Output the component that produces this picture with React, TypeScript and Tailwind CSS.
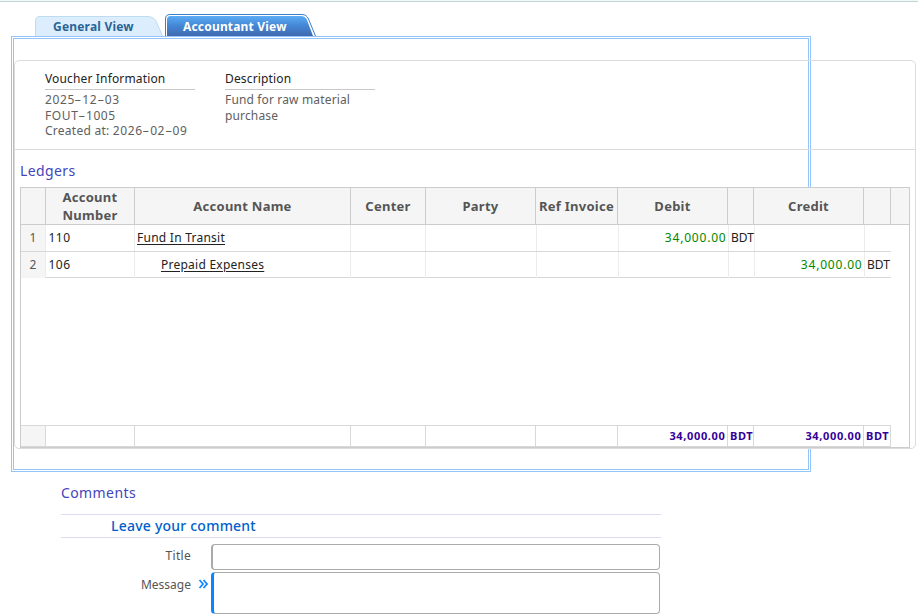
import React, { useState } from 'react';
import clsx from 'clsx';

const headCols = 'grid grid-cols-[25px_89px_216px_75px_110px_82px_110px_26px_110px_27px]';
const bodyCols = 'grid grid-cols-[25px_89px_216px_75px_111px_82px_110px_26px_110px_26px]';

const columns = [
  { id: 'no', label: '' },
  { id: 'number', label: 'Account Number' },
  { id: 'name', label: 'Account Name' },
  { id: 'center', label: 'Center' },
  { id: 'party', label: 'Party' },
  { id: 'ref', label: 'Ref Invoice' },
  { id: 'debit', label: 'Debit' },
  { id: 'debitCur', label: '' },
  { id: 'credit', label: 'Credit' },
  { id: 'creditCur', label: '' },
];

const rows = [
  { no: 1, number: '110', name: 'Fund In Transit', debit: '34,000.00', credit: '', indent: false },
  { no: 2, number: '106', name: 'Prepaid Expenses', debit: '', credit: '34,000.00', indent: true },
];

function Tabs() {
  return (
    <div className="flex h-[22px] items-end pl-[35px] text-[12px] font-bold">
      <div className="relative h-5 w-[128px]">
        <svg className="absolute inset-0" width="128" height="20" viewBox="0 0 128 20">
          <path d="M0.5 20V5Q0.5 0.5 5 0.5H112Q118.500 0.500 121 5L127.500 20Z" fill="#dceefd" />
          <path d="M0.5 20V5Q0.5 0.5 5 0.5H112Q118.500 0.500 121 5L127.500 20" fill="none" stroke="#bddcf0" />
        </svg>
        <span className="relative block pl-[18px] leading-[21px] tracking-[0.2px] text-[#2a6496]">General View</span>
      </div>
      <div className="relative ml-0.5 h-[22px] w-[151px]">
        <svg className="absolute inset-0" width="151" height="22" viewBox="0 0 151 22">
          <defs>
            <linearGradient id="tab" x1="0" y1="0" x2="0" y2="1">
              <stop offset="0" stopColor="#5cabf5" />
              <stop offset="0.5" stopColor="#4386d4" />
              <stop offset="1" stopColor="#4169b0" />
            </linearGradient>
          </defs>
          <path d="M0.5 22V5Q0.5 0.5 5 0.5H137Q141.500 0.500 143.500 5L150.500 22" fill="#fff" stroke="#3b7fc8" />
          <path d="M2 22V5.500Q2 2 5.500 2H136Q140 2 142 6L148 22Z" fill="url(#tab)" />
        </svg>
        <span className="relative block pl-[18px] leading-[25px] tracking-[0.18px] text-white">Accountant View</span>
      </div>
    </div>
  );
}

// dates and voucher numbers, with a wider dash between the groups
function Code({ value }: { value: string }) {
  return (
    <span className="tracking-[0.6px]">
      {value.split('-').map((part, i) => (
        <React.Fragment key={i}>
          {i > 0 && <span className="mx-[1.5px] inline-block scale-x-[1.8]">-</span>}
          {part}
        </React.Fragment>
      ))}
    </span>
  );
}

function Info({ title, children }: { title: string; children: React.ReactNode }) {
  return (
    <div className="w-[150px] text-[12px]">
      <div className="h-[19px] border-b border-[#c8c8c8] leading-[16px] tracking-[0.15px] text-[#222]">{title}</div>
      <div className="pt-0.5 leading-[15.600px] tracking-[0.15px] text-[#606060]">{children}</div>
    </div>
  );
}

function Ledgers() {
  return (
    <div className="ml-[5px] flex h-[261px] w-[890px] flex-col border border-[#ccc] bg-white text-[12px]">
      <div className="flex h-[37px] shrink-0 border-b border-[#ccc] bg-[#f5f5f5]">
        <div className={headCols}>
          {columns.map((col) => (
            <div
              key={col.id}
              className="flex items-center justify-center border-r border-[#ccc] text-center text-[13px] leading-[18px] font-bold tracking-[0.25px] text-[#555]">
              {col.label}
            </div>
          ))}
        </div>
      </div>
      <div className="flex-1">
        {rows.map((row) => (
          <div
            key={row.no}
            className={clsx(
              bodyCols,
              'w-[870px] border-b border-[#d8d8d8] text-[#222]',
              row.indent ? 'h-[26px] leading-[26px]' : 'h-[27px] leading-[26px]',
              '[&>div]:border-r [&>div]:border-[#ececec] [&>div:last-child]:border-r-0'
            )}>
            <div className="bg-[#f5f5f5] text-center text-[#555]">{row.no}</div>
            <div className="pl-[2.5px] tracking-[0.5px]">{row.number}</div>
            <div className={row.indent ? 'pl-[26px]' : 'pl-0.5'}>
              <a className="tracking-[0.25px] underline underline-offset-2">{row.name}</a>
            </div>
            <div />
            <div />
            <div />
            <div className="pr-[1.5px] text-right tracking-[0.8px] text-[#008800]">{row.debit}</div>
            <div className="pl-0.5 whitespace-nowrap">{row.debit && 'BDT'}</div>
            <div className="pr-[1.5px] text-right tracking-[0.8px] text-[#008800]">{row.credit}</div>
            <div className="pl-0.5 whitespace-nowrap">{row.credit && 'BDT'}</div>
          </div>
        ))}
      </div>
      <div
        className={clsx(
          headCols,
          'h-[22px] w-[870px] border-y border-[#d8d8d8] text-[11px] leading-5 font-bold tracking-[0.65px] text-[#330099]',
          '[&>div]:border-r [&>div]:border-[#d8d8d8]'
        )}>
        <div className="bg-[#f5f5f5]" />
        <div />
        <div />
        <div />
        <div />
        <div />
        <div className="pr-[1.5px] text-right">34,000.00</div>
        <div className="pl-0.5">BDT</div>
        <div className="pr-[1.5px] text-right">34,000.00</div>
        <div className="pl-0.5">BDT</div>
      </div>
    </div>
  );
}

function Comments() {
  const [title, setTitle] = useState('');
  const [message, setMessage] = useState('');

  return (
    <div className="ml-[61px] w-[600px] pt-[11px]">
      <h2 className="h-[31px] text-[14px] leading-5 tracking-[0.4px] text-[#4444bb]">Comments</h2>
      <div className="h-6 border-y border-[#dcdcf0] pl-[50px] text-[14px] leading-[22px] font-medium tracking-[0.22px] text-[#0060cc]">
        Leave your comment
      </div>
      <div className="flex pt-1.5">
        <label className="w-[130px] text-right text-[12px] leading-6 tracking-[0.3px] text-[#555]">Title</label>
        <input
          type="text"
          className="ml-5 h-[26px] w-[449px] rounded border border-l-2 border-[#aaa] bg-white px-1 text-[12px] outline-none"
          value={title}
          onChange={(e) => setTitle(e.currentTarget.value)}
        />
      </div>
      <div className="flex pt-0.5">
        <label className="w-[130px] text-right text-[12px] leading-[25px] text-[#555]">Message</label>
        <svg className="mt-[7px] ml-[7px]" width="11" height="10" viewBox="0 0 11 10" fill="none" stroke="#1188ff" strokeWidth="1.800">
          <path d="M1.500 1L5 5L1.500 9M5.500 1L9 5L5.500 9" />
        </svg>
        <textarea
          className="ml-0.5 h-[42px] w-[449px] resize-none rounded border border-l-[3px] border-[#aaa] border-l-[#0d84ff] bg-white px-1 text-[12px] outline-none"
          value={message}
          onChange={(e) => setMessage(e.currentTarget.value)}
        />
      </div>
    </div>
  );
}

export default function App() {
  return (
    <div className="h-[615px] w-[918px] overflow-hidden bg-white font-['Noto_Sans',sans-serif]">
      <div className="h-0.5 border-b border-[#c5d3d3] bg-[#eefafa]" />
      <div className="pt-3">
        <Tabs />
      </div>
      <div className="ml-[11px] h-[436px] w-[800px] border-[3px] border-double border-[#93c5f9] pt-[21px]">
        <div className="h-[389px] w-[902px] rounded-[5px] border border-[#dcdcdc]">
          <div className="flex h-[89px] gap-[30px] border-b border-[#dcdcdc] pt-[10px] pl-[30px]">
            <Info title="Voucher Information">
              <Code value="2025-12-03" />
              <br />
              <Code value="FOUT-1005" />
              <br />
              <span className="tracking-[0.25px]">Created at: </span>
              <Code value="2026-02-09" />
            </Info>
            <Info title="Description">Fund for raw material purchase</Info>
          </div>
          <h2 className="h-[37px] pt-[11px] pl-[5px] text-[14px] leading-5 tracking-[0.4px] text-[#4444bb]">Ledgers</h2>
          <Ledgers />
        </div>
      </div>
      <Comments />
    </div>
  );
}
